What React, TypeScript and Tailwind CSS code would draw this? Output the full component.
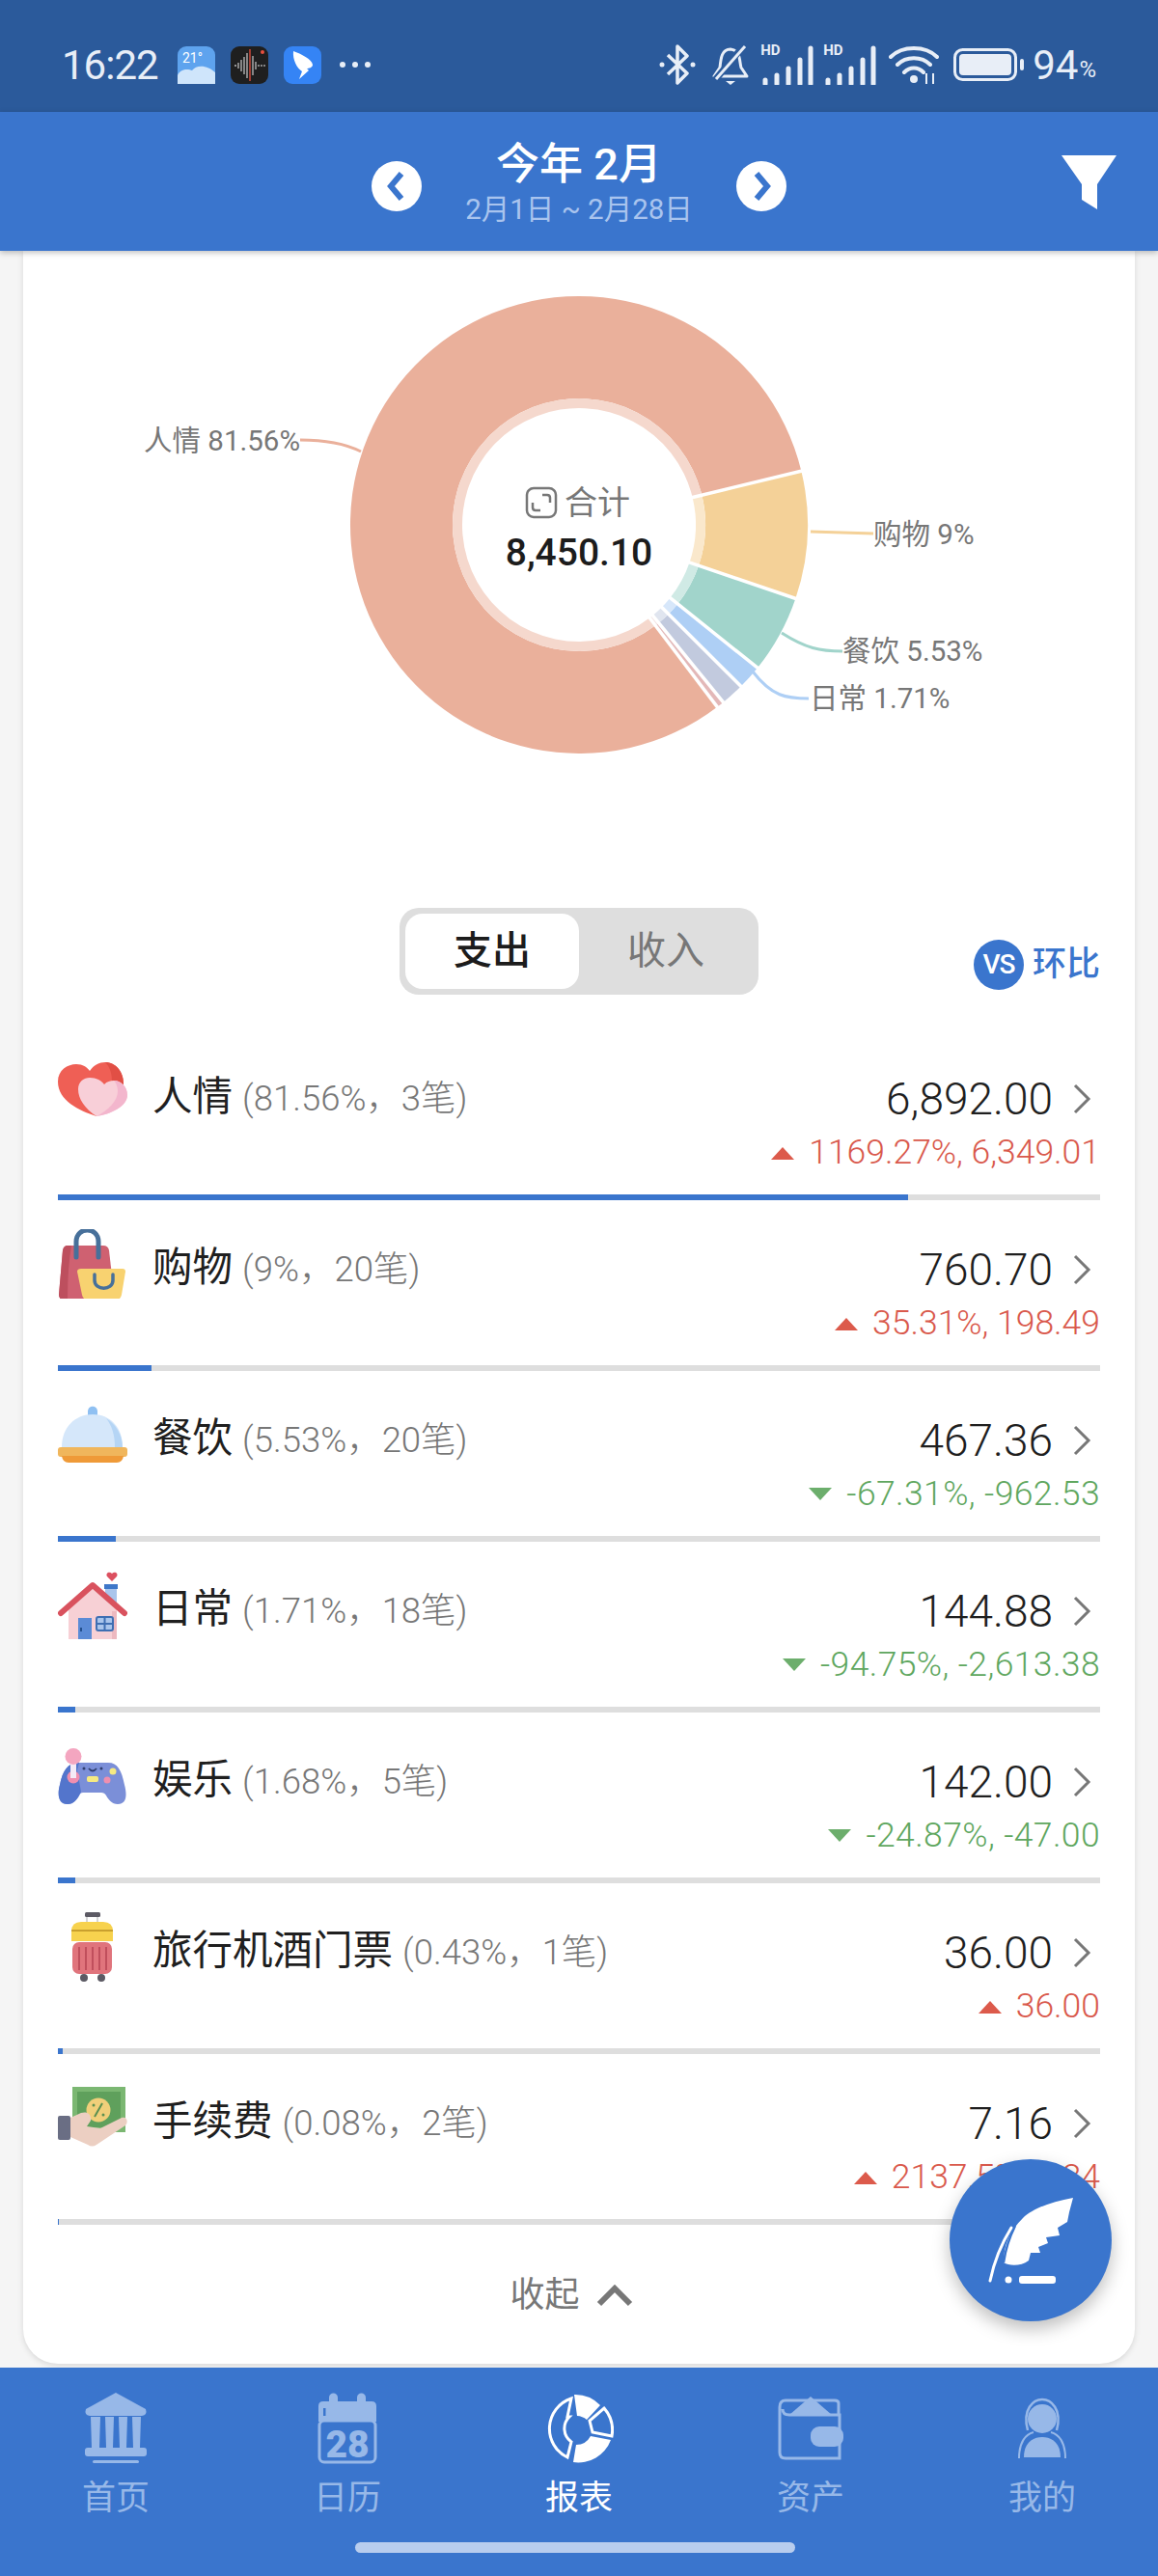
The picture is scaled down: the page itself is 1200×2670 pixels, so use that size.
import type { ReactNode } from "react";

const polar = (r: number, deg: number) => {
  const a = ((deg - 90) * Math.PI) / 180;
  return [600 + r * Math.cos(a), 544 + r * Math.sin(a)];
};

const arc = (r0: number, r1: number, from: number, to: number) => {
  const [x0, y0] = polar(r1, from);
  const [x1, y1] = polar(r1, to);
  const [x2, y2] = polar(r0, to);
  const [x3, y3] = polar(r0, from);
  const large = to - from > 180 ? 1 : 0;
  return `M${x0} ${y0}A${r1} ${r1} 0 ${large} 1 ${x1} ${y1}L${x2} ${y2}A${r0} ${r0} 0 ${large} 0 ${x3} ${y3}Z`;
};

const slices = [
  { from: 142.8, to: 436.4, color: "#eab09b", pale: "#f5d8cd" },
  { from: 76.4, to: 108.8, color: "#f4d198", pale: "#fae8cc" },
  { from: 108.8, to: 128.7, color: "#a1d4cb", pale: "#d0eae5" },
  { from: 128.7, to: 134.9, color: "#aecff5", pale: "#d7e7fa" },
  { from: 134.9, to: 140.9, color: "#c2cade", pale: "#e0e5ef" },
  { from: 140.9, to: 142.8, color: "#e3b8b8", pale: "#f1dcdc" },
];

const gaps = [76.4, 108.8, 128.7, 134.9, 140.9, 142.8];

const labels = [
  { text: "人情 81.56%", x: 149, y: 467, color: "#eab09b", line: "M311 456C340 456 358 460 374 468" },
  { text: "购物 9%", x: 905, y: 564, color: "#f4d198", line: "M840 551L905 553" },
  { text: "餐饮 5.53%", x: 873, y: 685, color: "#a1d4cb", line: "M810 656C835 672 850 675 873 675" },
  { text: "日常 1.71%", x: 839, y: 734, color: "#aecff5", line: "M780 696C800 722 815 724 838 724" },
];

const DonutChart = () => (
  <svg viewBox="24 260 1152 681" className="block w-[1152px] h-[681px]">
    {slices.map((s) => (
      <g key={s.from}>
        <path d={arc(131, 237, s.from, s.to)} fill={s.color} />
        <path d={arc(121, 131, s.from, s.to)} fill={s.pale} />
      </g>
    ))}
    {gaps.map((deg) => {
      const [x0, y0] = polar(119, deg);
      const [x1, y1] = polar(239, deg);
      return <path key={deg} d={`M${x0} ${y0}L${x1} ${y1}`} stroke="#fff" strokeWidth={3.500} />;
    })}
    {labels.map((l) => (
      <g key={l.text}>
        <path d={l.line} fill="none" stroke={l.color} strokeWidth={3} />
        <text x={l.x} y={l.y} fontSize={29.500} fill="#777777">{l.text}</text>
      </g>
    ))}
    <rect x={546} y={506} width={30} height={30} rx={7} fill="none" stroke="#777" strokeWidth={2.500} />
    <path d="M562 513h5q3 0 3 3v5M560 529h-5q-3 0-3-3v-5" fill="none" stroke="#777" strokeWidth={2.500} />
    <text x={585} y={533} fontSize={34} fill="#777777">合计</text>
    <text x={600} y={586} fontSize={39} fontWeight={500} textAnchor="middle" fill="#1c1c1c">8,450.10</text>
  </svg>
);

const IconBox = ({ children }: { children: ReactNode }) => (
  <svg viewBox="0 0 72 72" className="w-[72px] h-[72px] shrink-0">{children}</svg>
);

const HeartIcon = () => (
  <IconBox>
    <path d="M40 60C22 54 0 44 0 24C0 12 10 6 19 6C26 6 30 9 33 13C37 7 43 4 49 4C60 4 68 14 68 26C68 30 67 34 66 36Z" fill="#ef5f55" />
    <path d="M49 4C60 4 68 14 68 26L68 34L56 24C56 14 53 8 49 4Z" fill="#e14f45" />
    <path d="M40 60C28 52 21 42 21 32C21 24 27 20 33 20C40 20 45 23 48 27C51 24 54 23 58 23C66 23 72 30 72 38C72 50 54 58 40 60Z" fill="#f8cfd8" />
    <path d="M58 23C66 23 72 30 72 38C72 50 54 58 40 60C52 54 62 44 62 34C62 29 60 25 58 23Z" fill="#f3b6cd" />
  </IconBox>
);

const BagIcon = () => (
  <IconBox>
    <path d="M10 17H47Q52 17 53 22L58 66Q58 73 52 73H6Q1 73 1 68L5 22Q6 17 10 17Z" fill="#cf6171" />
    <path d="M10 17H14Q10 40 10 73H6Q1 73 1 68L5 22Q6 17 10 17Z" fill="#bd4f5e" />
    <path d="M19 29V13C19 -3 42 -3 42 13V29" fill="none" stroke="#47709a" strokeWidth={5} strokeLinecap="round" />
    <path d="M20 44Q20 41 24 41H67Q70 41 70 44L66 68Q65 73 61 73H30Q26 73 25 68Z" fill="#f8d270" />
    <path d="M38 47V53C38 64 57 64 57 53V47" fill="none" stroke="#47709a" strokeWidth={3.500} strokeLinecap="round" />
  </IconBox>
);

const DishIcon = () => (
  <IconBox>
    <path d="M31 16V12C31 5 41 5 41 12V16Z" fill="#8fc0f2" />
    <path d="M4 49C4 28 18 15 36 15C54 15 67 28 67 49Z" fill="#d5e7fa" />
    <path d="M50 19C60 25 67 36 67 49H59C59 36 56 27 50 19Z" fill="#b5d5f5" />
    <rect x={0} y={49} width={72} height={10} rx={3} fill="#f0b65c" />
    <path d="M4 58H68Q67 65 61 65H11Q5 65 4 58Z" fill="#ef9a38" />
  </IconBox>
);

const HouseIcon = () => (
  <IconBox>
    <path d="M56 11L51 6C49 3 53 0 56 3C59 0 63 3 61 6Z" fill="#dc5060" />
    <rect x={49} y={17} width={12} height={20} fill="#a9c5ec" />
    <rect x={48} y={14} width={14} height={5} fill="#3f78c9" />
    <path d="M11 71V40L36 19L61 40V71Z" fill="#f7d0d5" />
    <rect x={56} y={42} width={5} height={29} fill="#edb9c0" />
    <path d="M3 44L36 15L69 44" fill="none" stroke="#d9525e" strokeWidth={6} strokeLinecap="round" strokeLinejoin="round" />
    <rect x={21} y={49} width={14} height={22} fill="#5b8bd6" />
    <rect x={23} y={59} width={2} height={4} fill="#24508f" />
    <rect x={40} y={48} width={17} height={14} rx={2} fill="#a9c5ec" stroke="#3f6fb3" strokeWidth={2} />
    <path d="M48.500 48V62M40 55H57" stroke="#3f6fb3" strokeWidth={2} />
  </IconBox>
);

const GameIcon = () => (
  <IconBox>
    <path d="M22 22H52C62 22 66 30 69 45C72 56 71 65 62 65C56 65 52 60 50 56C49 54 47 53 45 53H26C24 53 23 54 22 56C20 60 16 65 10 65C1 65 -1 56 2 45C5 30 10 22 22 22Z" fill="#7b8fd8" />
    <path d="M22 22C10 22 5 30 2 45C-1 56 1 65 10 65C16 65 20 60 22 56L24 52L20 30Z" fill="#5375cc" />
    <circle cx={16} cy={37} r={6.500} fill="#ef8fb0" />
    <rect x={13} y={20} width={6} height={18} fill="#f4eaf6" />
    <circle cx={16} cy={15.500} r={8.500} fill="#f4a6c0" />
    <circle cx={27} cy={28} r={1.500} fill="#2f3f70" />
    <circle cx={45} cy={28} r={1.500} fill="#2f3f70" />
    <path d="M32 28Q36 33 40 28" fill="none" stroke="#2f3f70" strokeWidth={1.800} />
    <rect x={30} y={36} width={12} height={6} rx={2} fill="#f6ea82" />
    <circle cx={57} cy={31} r={3.500} fill="#f6ea82" />
    <circle cx={51} cy={40} r={3.500} fill="#ef8fb0" />
  </IconBox>
);

const SuitcaseIcon = () => (
  <IconBox>
    <rect x={28} y={0} width={16} height={5} rx={1.500} fill="#5c5a64" />
    <path d="M30 5V10M41 5V10" stroke="#c9c9c9" strokeWidth={1.500} />
    <path d="M14 30V20Q14 10 24 10H47Q57 10 57 20V30Z" fill="#f7d24e" />
    <path d="M14 18H57V20H14Z" fill="#c9a02e" />
    <rect x={15} y={31} width={41} height={33} rx={7} fill="#e0747c" />
    <path d="M22 36V60M29 36V60M36 36V60M43 36V60M50 36V60" stroke="#c04f5c" strokeWidth={2} />
    <circle cx={27} cy={68} r={4} fill="#5c5a64" />
    <circle cx={45} cy={68} r={4} fill="#5c5a64" />
  </IconBox>
);

const FeeIcon = () => (
  <IconBox>
    <g transform="translate(0 4)">
      <rect x={15} y={0} width={55} height={47} fill="#7bb772" />
      <rect x={20} y={5} width={45} height={37} fill="#5fa05c" />
      <circle cx={42} cy={24} r={12.500} fill="#f0cf7a" />
      <path d="M46 17L38 31" stroke="#5a8f50" strokeWidth={2} />
      <circle cx={37} cy={19} r={1.500} fill="#5a8f50" />
      <circle cx={47} cy={29} r={1.500} fill="#5a8f50" />
      <rect x={0} y={30} width={13} height={25} rx={2} fill="#6a6e84" />
      <path d="M13 32L24 27C30 25 35 28 34 35L30 41L44 43L66 32C72 30 73 37 70 40L40 60C37 62 34 62 31 60L13 52Z" fill="#eccfc2" />
    </g>
  </IconBox>
);

type Row = {
  icon: ReactNode;
  name: string;
  sub: string;
  amount: string;
  delta: string;
  up: boolean;
  pct: number;
};

const rows: Row[] = [
  { icon: <HeartIcon />, name: "人情", sub: "(81.56%，3笔)", amount: "6,892.00", delta: "1169.27%, 6,349.01", up: true, pct: 81.56 },
  { icon: <BagIcon />, name: "购物", sub: "(9%，20笔)", amount: "760.70", delta: "35.31%, 198.49", up: true, pct: 9 },
  { icon: <DishIcon />, name: "餐饮", sub: "(5.53%，20笔)", amount: "467.36", delta: "-67.31%, -962.53", up: false, pct: 5.53 },
  { icon: <HouseIcon />, name: "日常", sub: "(1.71%，18笔)", amount: "144.88", delta: "-94.75%, -2,613.38", up: false, pct: 1.71 },
  { icon: <GameIcon />, name: "娱乐", sub: "(1.68%，5笔)", amount: "142.00", delta: "-24.87%, -47.00", up: false, pct: 1.68 },
  { icon: <SuitcaseIcon />, name: "旅行机酒门票", sub: "(0.43%，1笔)", amount: "36.00", delta: "36.00", up: true, pct: 0.43 },
  { icon: <FeeIcon />, name: "手续费", sub: "(0.08%，2笔)", amount: "7.16", delta: "2137.5%, 6.84", up: true, pct: 0.08 },
];

const CategoryRow = ({ row }: { row: Row }) => (
  <div className="h-[177px] flex flex-col">
    <div className="flex flex-1 pt-[30px]">
      {row.icon}
      <div className="ml-[26px] mt-[10px] flex items-baseline h-[60px] leading-[60px]">
        <span className="text-[41.500px] text-[#1f1f1f]">{row.name}</span>
        <span className="ml-[10px] text-[36.500px] font-light text-[#777777]">{row.sub}</span>
      </div>
      <div className="ml-auto flex flex-col items-end">
        <div className="flex items-center h-[56px] mt-[14px]">
          <span className="text-[46px] font-light text-[#1f1f1f]">{row.amount}</span>
          <svg viewBox="0 0 20 34" className="w-[20px] h-[34px] ml-[20px] mr-[9px]">
            <path d="M3 3L17 17L3 31" fill="none" stroke="#777" strokeWidth={3} />
          </svg>
        </div>
        <div className="flex items-center h-[44px] mt-[6px]">
          <svg viewBox="0 0 24 14" className="w-[24px] h-[14px] mr-[15px]">
            {row.up ? (
              <path d="M12 1L24 14H0Z" fill="#dc5a4b" />
            ) : (
              <path d="M12 13L0 0H24Z" fill="#6cae6c" />
            )}
          </svg>
          <span className={row.up ? "text-[35.500px] font-light text-[#d9594c]" : "text-[35.500px] font-light text-[#5fa75f] tracking-[0.4px]"}>
            {row.delta}
          </span>
        </div>
      </div>
    </div>
    <div className="h-[6px] bg-[#dedede]">
      <div className="h-full bg-[#3a75cd]" style={{ width: `${row.pct}%` }} />
    </div>
  </div>
);

const BankIcon = ({ color }: { color: string }) => (
  <svg viewBox="0 0 66 76" className="w-[66px] h-[76px]" fill={color}>
    <path d="M33 1L64 18Q66 24 60 25H6Q0 24 2 18Z" />
    <path d="M7 26H17L16 58H8ZM22 26H31L30 58H23ZM36 26H45L44 58H37ZM50 26H59L58 58H51Z" />
    <rect x={1} y={58} width={64} height={9} rx={3} />
    <rect x={9} y={71} width={48} height={3} rx={1.500} />
  </svg>
);

const CalendarIcon = ({ color }: { color: string }) => (
  <svg viewBox="0 0 62 76" className="w-[62px] h-[76px]">
    <path d="M12 10V6C12 0 21 0 21 6V10H41V6C41 0 50 0 50 6V10H56Q61 10 61 15V31H1V15Q1 10 6 10Z" fill={color} />
    <rect x={6} y={17} width={2.500} height={8} fill="#3a75cd" />
    <rect x={2} y={30} width={58} height={43} rx={5} fill="none" stroke={color} strokeWidth={3} />
    <text x={31} y={68} textAnchor="middle" fontSize={39} fontWeight={900} fill={color}>28</text>
  </svg>
);

const PieIcon = () => (
  <svg viewBox="0 0 72 72" className="w-[72px] h-[72px]">
    <path d="M28 5A33 33 0 0 0 24 66L28 50A17 17 0 0 1 26 24L24 24Z" fill="none" stroke="#fff" strokeWidth={3} />
    <path d="M31 1A36 36 0 0 1 58 12L44 27A17 17 0 0 0 34 23Z" fill="#fff" />
    <path d="M62 15A35 35 0 0 1 70 44L50 40L47 28Z" fill="none" stroke="#fff" strokeWidth={3} />
    <path d="M69 48A36 36 0 0 1 30 71L33 53A17 17 0 0 0 48 44Z" fill="#fff" />
  </svg>
);

const WalletIcon = ({ color }: { color: string }) => (
  <svg viewBox="0 0 68 68" className="w-[68px] h-[68px]">
    <path d="M34 1L56 20H12Z" fill={color} />
    <path d="M63 20V8Q63 5 59 5H8Q2 5 2 12V59Q2 65 8 65H64V20H12Q5 20 5 14" fill="none" stroke={color} strokeWidth={3} />
    <rect x={34} y={32} width={34} height={21} rx={9} fill={color} />
  </svg>
);

const PersonIcon = ({ color }: { color: string }) => (
  <svg viewBox="0 0 50 64" className="w-[50px] h-[64px]">
    <path d="M10 34C4 12 16 2 25 2C34 2 46 12 40 34" fill="none" stroke={color} strokeWidth={2.500} />
    <circle cx={25} cy={22} r={15} fill={color} />
    <path d="M6 62C6 46 16 41 25 41C34 41 44 46 44 62Z" fill={color} />
    <path d="M1 63C1 46 8 38 16 36M49 63C49 46 42 38 34 36" fill="none" stroke={color} strokeWidth={2} />
  </svg>
);

const navPale = "#97b8e8";

const tabs = [
  { label: "首页", icon: <BankIcon color={navPale} />, active: false },
  { label: "日历", icon: <CalendarIcon color={navPale} />, active: false },
  { label: "报表", icon: <PieIcon />, active: true },
  { label: "资产", icon: <WalletIcon color={navPale} />, active: false },
  { label: "我的", icon: <PersonIcon color={navPale} />, active: false },
];

const SignalIcon = ({ className }: { className: string }) => (
  <div className={`relative w-[55px] h-[42px] ${className}`}>
    <span className="absolute left-0 top-[-3px] text-[15px] font-bold leading-[18px]">HD</span>
    <svg viewBox="0 0 55 42" className="w-[55px] h-[42px]">
      <path d="M5 37V41M17 32V41M29 25V41M41 16V41M52 4V41" stroke="#e8eef7" strokeWidth={5} strokeLinecap="round" />
    </svg>
  </div>
);

const StatusBar = () => (
  <div className="h-[116px] bg-[#2b5a9b] flex items-center pl-[64px] pr-[64px] pt-[18px] text-[#e8eef7]">
    <span className="text-[42px] w-[120px] tracking-[-1px]">16:22</span>
    <svg viewBox="0 0 39 39" className="w-[39px] h-[39px]">
      <rect width={39} height={39} rx={9} fill="#5ea3ee" />
      <path d="M0 39V30C4 22 12 24 15 25C20 18 32 20 39 27V39Z" fill="#cfe5fb" />
      <text x={5} y={17} fontSize={14} fill="#fff">21°</text>
    </svg>
    <svg viewBox="0 0 39 39" className="w-[39px] h-[39px] ml-[16px]">
      <rect width={39} height={39} rx={9} fill="#1f1f1f" />
      <path d="M4 20H6M8 17V23M11 14V26M14 11V29M17 7V33M23 10V30M26 16V24M29 19V21M32 19V21M35 19V21" stroke="#bdbdbd" strokeWidth={1.300} />
      <path d="M20 3V36" stroke="#e8503f" strokeWidth={1.300} />
      <circle cx={33} cy={6} r={2} fill="#e8503f" />
    </svg>
    <svg viewBox="0 0 39 39" className="w-[39px] h-[39px] ml-[16px]">
      <rect width={39} height={39} rx={9} fill="#3584f5" />
      <path d="M10 5C18 8 29 13 30 19C30 22 26 23 24 23L26 25L16 34L19 26C14 23 9 14 10 5Z" fill="#fff" />
    </svg>
    <div className="flex gap-[7px] ml-[19px]">
      <span className="w-[6px] h-[6px] rounded-full bg-[#e8eef7]" />
      <span className="w-[6px] h-[6px] rounded-full bg-[#e8eef7]" />
      <span className="w-[6px] h-[6px] rounded-full bg-[#e8eef7]" />
    </div>
    <div className="ml-auto flex items-center">
      <svg viewBox="0 0 38 42" className="w-[38px] h-[42px]">
        <path d="M9 11L29 30L19 40V2L29 12L9 31" fill="none" stroke="#e8eef7" strokeWidth={3.500} strokeLinejoin="round" />
        <circle cx={3} cy={21} r={2.500} fill="#e8eef7" />
        <circle cx={35} cy={21} r={2.500} fill="#e8eef7" />
      </svg>
      <svg viewBox="0 0 38 42" className="w-[38px] h-[42px] ml-[17px]">
        <path d="M2 33H36L30 24C28 18 30 6 19 5C10 5 9 14 8 24Z" fill="none" stroke="#e8eef7" strokeWidth={3} strokeLinejoin="round" />
        <path d="M3 37L33 1" stroke="#2b5a9b" strokeWidth={7} />
        <path d="M4 36L34 2" stroke="#e8eef7" strokeWidth={3} />
        <path d="M14 38H24L19 42Z" fill="#e8eef7" />
      </svg>
      <SignalIcon className="ml-[12px]" />
      <SignalIcon className="ml-[10px]" />
      <svg viewBox="0 0 52 42" className="w-[52px] h-[42px] ml-[13px]">
        <path d="M2 13C14 1 38 1 50 13M9 21C18 12 34 12 43 21M16 29C22 23 30 23 36 29" fill="none" stroke="#e8eef7" strokeWidth={4} strokeLinecap="round" />
        <circle cx={26} cy={36} r={4} fill="#e8eef7" />
        <path d="M39 30V41M46 30V41" stroke="#e8eef7" strokeWidth={2} />
      </svg>
      <svg viewBox="0 0 75 34" className="w-[75px] h-[34px] ml-[15px]">
        <rect x={1.500} y={1.500} width={63} height={31} rx={8} fill="none" stroke="#e8eef7" strokeWidth={3} />
        <rect x={6} y={6} width={54} height={22} rx={4} fill="#e8eef7" />
        <rect x={69} y={11} width={4} height={12} rx={2} fill="#e8eef7" />
      </svg>
      <span className="text-[42px] ml-[7px]">94</span>
      <span className="text-[24px] mt-[10px] ml-[1px]">%</span>
    </div>
  </div>
);

const Header = () => (
  <div className="relative z-10 h-[144px] bg-[#3a75cd] shadow-[0_2px_6px_rgba(0,0,0,0.25)] flex items-center justify-center">
    <svg viewBox="0 0 52 52" className="w-[52px] h-[52px] mt-[10px]">
      <circle cx={26} cy={26} r={26} fill="#fff" />
      <path d="M31 13L20 26L31 39" fill="none" stroke="#3a75cd" strokeWidth={6} />
    </svg>
    <div className="w-[326px] flex flex-col items-center pt-[3px]">
      <span className="text-[45px] font-medium text-white leading-[54px]">今年 2月</span>
      <span className="text-[29.500px] text-[#a9c4ee] leading-[38px]">2月1日 ~ 2月28日</span>
    </div>
    <svg viewBox="0 0 52 52" className="w-[52px] h-[52px] mt-[10px]">
      <circle cx={26} cy={26} r={26} fill="#fff" />
      <path d="M21 13L32 26L21 39" fill="none" stroke="#3a75cd" strokeWidth={6} />
    </svg>
    <svg viewBox="0 0 57 56" className="absolute right-[43px] top-[45px] w-[57px] h-[56px]">
      <path d="M0 0H57L37 30V56L21 46V30Z" fill="#fff" />
    </svg>
  </div>
);

const Toggle = () => (
  <div className="relative h-[90px]">
    <div className="mx-auto w-[372px] h-[90px] rounded-[20px] bg-[#dedede] p-[6px] flex text-[40px]">
      <div className="w-[180px] rounded-[18px] bg-white flex items-center justify-center font-medium text-[#1c1c1c]">支出</div>
      <div className="flex-1 flex items-center justify-center text-[#777777]">收入</div>
    </div>
    <div className="absolute right-[36px] top-[33px] flex items-center gap-[9px]">
      <span className="w-[52px] h-[52px] rounded-full bg-[#3a75cd] flex items-center justify-center text-[28px] font-medium tracking-[-1px] text-white">VS</span>
      <span className="text-[35px] font-medium text-[#3a75cd]">环比</span>
    </div>
  </div>
);

const App = () => (
  <div className="relative w-[1200px] h-[2670px] overflow-hidden flex flex-col font-['Roboto','Noto_Sans_CJK_SC',sans-serif] bg-[#f5f5f5]">
    <StatusBar />
    <Header />
    <main className="flex-1 px-[24px] overflow-hidden">
      <div className="h-[2190px] bg-white rounded-b-[36px] shadow-[0_2px_6px_rgba(0,0,0,0.12)] flex flex-col">
        <DonutChart />
        <Toggle />
        <div className="px-[36px] mt-[36px]">
          {rows.map((row) => (
            <CategoryRow key={row.name} row={row} />
          ))}
        </div>
        <div className="flex items-center justify-center h-[144px] pt-[2px] pr-[16px] text-[36px] text-[#777777]">
          收起
          <svg viewBox="0 0 38 24" className="w-[38px] h-[24px] ml-[17px]">
            <path d="M3 21L19 5L35 21" fill="none" stroke="#777" strokeWidth={6} />
          </svg>
        </div>
      </div>
    </main>
    <nav className="h-[216px] bg-[#3a75cd] relative">
      <div className="grid grid-cols-5 pt-[24px]">
        {tabs.map((t) => (
          <div key={t.label} className="flex flex-col items-center">
            <div className="h-[78px] flex items-center justify-center">{t.icon}</div>
            <span className={t.active ? "mt-[11px] text-[35px] leading-[46px] text-white" : "mt-[11px] text-[35px] leading-[46px] text-[#97b8e8]"}>
              {t.label}
            </span>
          </div>
        ))}
      </div>
      <div className="absolute left-[368px] top-[181px] w-[456px] h-[11px] rounded-full bg-[#b8cdee]" />
    </nav>
    <button className="absolute left-[984px] top-[2238px] w-[168px] h-[168px] rounded-full bg-[#3a75cd] shadow-[0_8px_18px_rgba(0,0,0,0.25)] flex items-center justify-center">
      <svg viewBox="0 0 96 90" className="w-[96px] h-[90px]">
        <path d="M92 1C70 5 50 12 40 22C26 36 20 50 20 68C26 72 38 72 46 66L48 58L58 58L56 52L66 48L64 42L78 40L76 32L86 26L88 16Z" fill="#fff" />
        <path d="M32 30C26 42 22 54 20 68" fill="none" stroke="#3a75cd" strokeWidth={2.500} />
        <path d="M28 32C18 48 10 68 6 87" fill="none" stroke="#fff" strokeWidth={3} strokeLinecap="round" />
        <circle cx={25} cy={86} r={3.500} fill="#fff" />
        <rect x={36} y={82} width={38} height={8} rx={3} fill="#fff" />
      </svg>
    </button>
  </div>
);

export default App;
